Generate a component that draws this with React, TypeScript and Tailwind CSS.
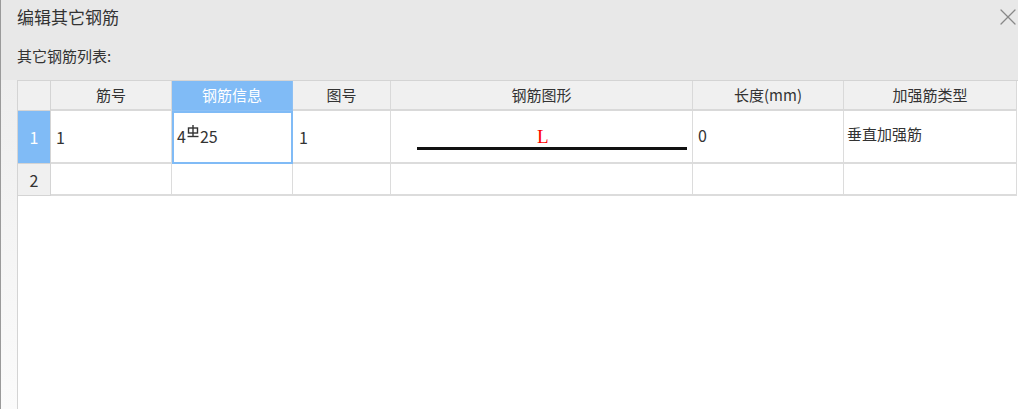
import { X } from "lucide-react";

const cols = ["筋号", "钢筋信息", "图号", "钢筋图形", "长度(mm)", "加强筋类型"];

function RebarGrade() {
  // 三级钢符号
  return (
    <svg width="12" height="14" viewBox="0 0 12 14" className="inline-block -mt-[7px] mx-[1px]">
      <rect x="1.5" y="3" width="9" height="5" fill="none" stroke="#333" strokeWidth="1.4" />
      <line x1="6" y1="0" x2="6" y2="12" stroke="#333" strokeWidth="1.4" />
      <line x1="0.5" y1="11.5" x2="11.5" y2="11.5" stroke="#333" strokeWidth="1.4" />
    </svg>
  );
}

function Shape() {
  return (
    <div className="relative h-full w-full">
      <span className="absolute left-[146px] top-[16px] text-[19px] leading-none text-[#ff0000] font-['Liberation_Serif',serif]">
        L
      </span>
      <div className="absolute left-[26px] top-[36px] h-[3px] w-[270px] bg-[#111]" />
    </div>
  );
}

export default function App() {
  return (
    <div className="relative h-[409px] w-[1018px] overflow-hidden bg-[#e8e8e8] font-['Noto_Sans_CJK_SC','Noto_Sans',sans-serif] text-[#333]">
      <div className="absolute left-0 top-0 h-full w-px bg-[#9a9a9a]" />
      <div className="absolute left-px top-[80px] bottom-0 w-[16px] bg-gradient-to-b from-[#eeeeee] to-[#fbfbfb]" />

      <div className="flex h-[33px] items-center justify-between pl-[17px]">
        <span className="text-[17px] text-[#333] pt-[1px]">编辑其它钢筋</span>
        <X className="h-[28px] w-[28px] -mr-[4px] text-[#888]" strokeWidth={1.1} />
      </div>
      <div className="pl-[17px] pt-[12px] h-[47px] text-[15px] text-[#333]">其它钢筋列表:</div>

      <div className="relative ml-[17px] h-[329px] w-[1001px] border-l border-t border-[#d4d4d4] bg-white">
        <div className="grid grid-cols-[33px_121px_121px_98px_302px_151px_173px] grid-rows-[30px_53px_32px] text-[15px]">
          <div className="border-r border-b border-[#d4d4d4] bg-[#f0f0f0]" />
          {cols.map((c, i) => (
            <div
              key={c}
              className={
                i === 1
                  ? "flex items-center justify-center border-r border-b border-[#8cc0f5] bg-[#80bbf6] text-white"
                  : "flex items-center justify-center border-r border-b-2 border-[#d9d9d9] bg-[#f0f0f0] text-[#333]"
              }
            >
              {c}
            </div>
          ))}

          <div className="flex items-center justify-center border-r border-b border-[#d4d4d4] bg-[#80bbf6] text-white text-[16px]">1</div>
          <div className="flex items-center border-r border-b-2 border-[#dcdcdc] pl-[5px] text-[16px]">1</div>
          <div className="flex items-center border-2 border-[#80bbf6] pl-[3px] pb-[4px] text-[16px]">
            4<RebarGrade />25
          </div>
          <div className="flex items-center border-r border-b-2 border-[#dcdcdc] pl-[6px] text-[16px]">1</div>
          <div className="border-r border-b-2 border-[#dcdcdc]">
            <Shape />
          </div>
          <div className="flex items-center border-r border-b-2 border-[#dcdcdc] pl-[5px] pb-[4px] text-[16px]">0</div>
          <div className="flex items-center border-r border-b-2 border-[#dcdcdc] pl-[3px] pb-[4px]">垂直加强筋</div>

          <div className="flex items-center justify-center border-r border-b border-[#d4d4d4] bg-[#f0f0f0] text-[16px]">2</div>
          {cols.map((c) => (
            <div key={c} className="border-r border-b-2 border-[#dcdcdc]" />
          ))}
        </div>
      </div>
    </div>
  );
}
